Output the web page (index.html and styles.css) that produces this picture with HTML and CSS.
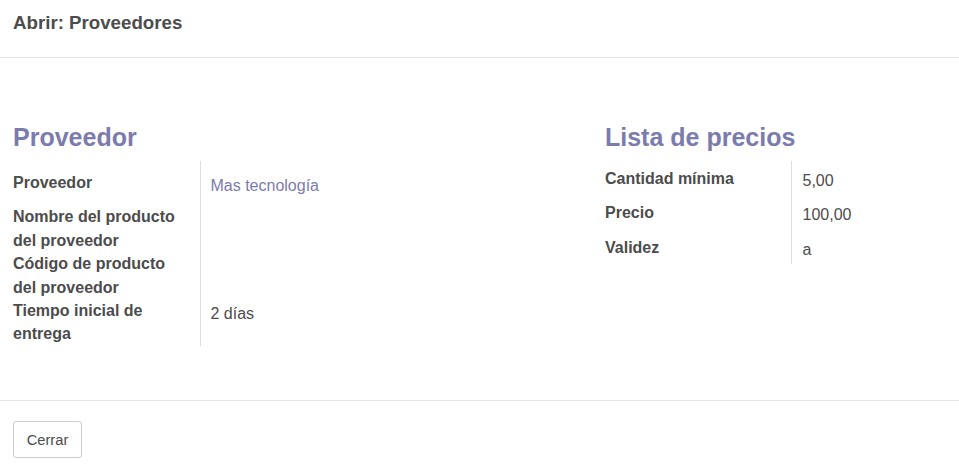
FILE: index.html
```html
<!DOCTYPE html>
<html lang="es">
<head>
<meta charset="utf-8">
<title>Abrir: Proveedores</title>
<link rel="stylesheet" href="styles.css">
</head>
<body>
<div class="modal">
  <header class="modal-header">
    <h4 class="modal-title">Abrir: Proveedores</h4>
  </header>
  <main class="modal-body">
    <section class="group group-left">
      <h2 class="group-title">Proveedor</h2>
      <table class="fields">
        <tr class="row-tall">
          <td class="label">Proveedor</td>
          <td class="value"><a class="link" href="#">Mas tecnología</a></td>
        </tr>
        <tr class="row-plain">
          <td class="label">Nombre del producto del proveedor</td>
          <td class="value"></td>
        </tr>
        <tr class="row-plain">
          <td class="label">Código de producto del proveedor</td>
          <td class="value"></td>
        </tr>
        <tr class="row-plain">
          <td class="label">Tiempo inicial de entrega</td>
          <td class="value">2 días</td>
        </tr>
      </table>
    </section>
    <section class="group group-right">
      <h2 class="group-title">Lista de precios</h2>
      <table class="fields">
        <tr class="row-std">
          <td class="label">Cantidad mínima</td>
          <td class="value">5,00</td>
        </tr>
        <tr class="row-std">
          <td class="label">Precio</td>
          <td class="value">100,00</td>
        </tr>
        <tr class="row-std">
          <td class="label">Validez</td>
          <td class="value">a</td>
        </tr>
      </table>
    </section>
  </main>
  <footer class="modal-footer">
    <button class="btn" type="button">Cerrar</button>
  </footer>
</div>
</body>
</html>
```
FILE: styles.css
```css
* { box-sizing: border-box; }
html, body {
  margin: 0;
  padding: 0;
  background: #fff;
}
body {
  font-family: "Liberation Sans", Arial, sans-serif;
  font-size: 16px;
  color: #4c4c4c;
  overflow: hidden;
}
.modal {
  width: 959px;
  height: 467px;
  display: flex;
  flex-direction: column;
}
.modal-header {
  height: 58px;
  padding: 12px 13px 0;
  border-bottom: 1px solid #e5e5e5;
}
.modal-title {
  margin: 0;
  font-size: 18.7px;
  line-height: 22px;
  font-weight: bold;
  color: #4c4c4c;
}
.modal-body {
  height: 342px;
  display: flex;
  padding: 64px 0 0 13px;
}
.group-left { width: 592px; }
.group-right { flex: 1; }
.group-title {
  margin: 0 0 9px;
  font-size: 25px;
  line-height: 30px;
  font-weight: bold;
  color: #7c7bad;
}
.fields {
  border-collapse: collapse;
  border-spacing: 0;
}
.fields td {
  vertical-align: top;
  line-height: 23.4px;
  padding: 0;
}
.fields .label {
  width: 187px;
  padding-right: 10px;
  font-weight: bold;
  color: #4c4c4c;
  border-right: 1px solid #ddd;
}
.group-right .fields .label { width: 186px; }
.fields .value {
  padding-left: 10px;
  color: #4c4c4c;
}
.group-right .fields .value { padding-left: 11px; }
.row-std .label { padding-top: 6px; }
.row-std .value { padding-top: 8px; padding-bottom: 3px; }
.row-tall .label { padding-top: 10px; }
.row-tall .value { padding-top: 13px; padding-bottom: 8px; }
.row-plain .value { padding-top: 3px; }
.link {
  color: #7c7bad;
  text-decoration: none;
}
.modal-footer {
  flex: 1;
  border-top: 1px solid #e5e5e5;
  padding: 20px 13px 0;
}
.btn {
  width: 69px;
  height: 37px;
  padding: 0;
  font-family: "Liberation Sans", Arial, sans-serif;
  font-size: 14.7px;
  color: #4c4c4c;
  background: #fff;
  border: 1px solid #ccc;
  border-radius: 3px;
}
```
